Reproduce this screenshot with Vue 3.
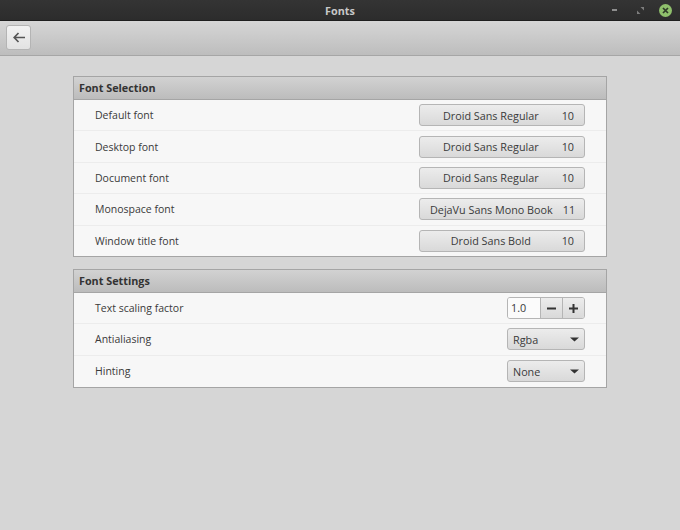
<template>
  <div class="window">
    <div class="titlebar">
      <span class="title">Fonts</span>
      <div class="wm-buttons">
        <span class="wm-min"></span>
        <svg class="wm-max" width="7" height="7" viewBox="0 0 7 7">
          <path d="M3.5 0H7V3.5ZM3.5 7H0V3.5Z" fill="#7d7d7d" />
        </svg>
        <span class="wm-close">
          <svg width="7" height="7" viewBox="0 0 7 7">
            <path d="M1 1L6 6M6 1L1 6" stroke="#2f3a28" stroke-width="1.7" />
          </svg>
        </span>
      </div>
    </div>

    <div class="toolbar">
      <button class="btn-back">
        <svg width="12" height="11" viewBox="0 0 12 11">
          <path d="M5.5 1L1.2 5.5L5.5 10M2 5.5H12" fill="none" stroke="#555" stroke-width="1.7" />
        </svg>
      </button>
    </div>

    <div class="content">
      <section class="panel">
        <h2 class="panel-header">Font Selection</h2>
        <div v-for="f in fuentes" :key="f.label" class="row">
          <span class="label">{{ f.label }}</span>
          <button class="btn btn-font">
            <span class="font-name">{{ f.font }}</span>
            <span class="font-size">{{ f.size }}</span>
          </button>
        </div>
      </section>

      <section class="panel">
        <h2 class="panel-header">Font Settings</h2>
        <div class="row">
          <span class="label">Text scaling factor</span>
          <div class="spin">
            <span class="spin-value">1.0</span>
            <button class="spin-btn">
              <svg width="9" height="9" viewBox="0 0 9 9"><path d="M0 4.5H9" stroke="#333" stroke-width="2" /></svg>
            </button>
            <button class="spin-btn">
              <svg width="9" height="9" viewBox="0 0 9 9"><path d="M0 4.5H9M4.5 0V9" stroke="#333" stroke-width="2" /></svg>
            </button>
          </div>
        </div>
        <div v-for="c in combos" :key="c.label" class="row">
          <span class="label">{{ c.label }}</span>
          <button class="btn btn-combo">
            <span>{{ c.value }}</span>
            <svg width="9" height="5" viewBox="0 0 9 5"><path d="M0 0.5H9L4.5 4.5Z" fill="#333" /></svg>
          </button>
        </div>
      </section>
    </div>
  </div>
</template>

<script setup>
const fuentes = [
  { label: 'Default font', font: 'Droid Sans Regular', size: 10 },
  { label: 'Desktop font', font: 'Droid Sans Regular', size: 10 },
  { label: 'Document font', font: 'Droid Sans Regular', size: 10 },
  { label: 'Monospace font', font: 'DejaVu Sans Mono Book', size: 11 },
  { label: 'Window title font', font: 'Droid Sans Bold', size: 10 }
]

const combos = [
  { label: 'Antialiasing', value: 'Rgba' },
  { label: 'Hinting', value: 'None' }
]
</script>

<style>
html, body { margin: 0; background: #d6d6d6; }
</style>

<style scoped>
.window {
  width: 680px;
  height: 530px;
  overflow: hidden;
  display: flex;
  flex-direction: column;
  font-family: "Open Sans", "Noto Sans", sans-serif;
  font-size: 10.8px;
  color: #3a3a3a;
  background: #d6d6d6;
}

.titlebar {
  height: 20px;
  flex: none;
  position: relative;
  display: flex;
  align-items: center;
  justify-content: center;
  background: linear-gradient(#343434, #2c2c2c);
  border-bottom: 1px solid #1f1f1f;
}
.title { color: #c8c8c8; font-weight: 700; font-size: 10.8px; }
.wm-buttons {
  position: absolute;
  right: 8px;
  top: 3px;
  display: flex;
  align-items: center;
  gap: 15px;
  height: 14px;
}
.wm-min { width: 5px; height: 2px; background: #8e8e8e; margin-right: 5px; }
.wm-max { display: block; }
.wm-close {
  width: 13px;
  height: 13px;
  border-radius: 50%;
  background: #8fc06c;
  display: flex;
  align-items: center;
  justify-content: center;
}

.toolbar {
  height: 30px;
  flex: none;
  padding: 4px 6px 0;
  background: linear-gradient(#d6d6d6, #bdbdbd);
  border-bottom: 1px solid #a6a6a6;
}
.btn-back {
  width: 25px;
  height: 25px;
  padding: 0;
  display: flex;
  align-items: center;
  justify-content: center;
  border: 1px solid #b4b4b4;
  border-radius: 3px;
  background: linear-gradient(#f2f2f2, #e2e2e2);
}

.content {
  padding: 20px 73px 0;
  display: flex;
  flex-direction: column;
  gap: 12px;
}

.panel {
  border: 1px solid #a5a5a5;
  background: #f7f7f7;
  width: 534px;
  box-sizing: border-box;
}
.panel-header {
  margin: 0;
  height: 22px;
  line-height: 22px;
  padding-left: 5px;
  font-size: 10.8px;
  font-weight: 700;
  color: #333;
  background: linear-gradient(#d2d2d2, #bcbcbc);
  border-bottom: 1px solid #a5a5a5;
}
.panel + .panel .panel-header { height: 22.4px; }

.row {
  height: 31.4px;
  box-sizing: border-box;
  padding: 0 21px;
  display: flex;
  align-items: center;
  justify-content: space-between;
  border-bottom: 1px solid #ececec;
}
.row:last-child { height: 30.4px; border-bottom: none; }
.panel + .panel .row { height: 31.1px; }
.label { font-size: 10.5px; }

.btn {
  height: 22px;
  box-sizing: border-box;
  padding: 0;
  border: 1px solid #b5b5b5;
  border-radius: 3px;
  background: linear-gradient(#ececec, #d9d9d9);
  font: inherit;
  color: #3a3a3a;
  display: flex;
  align-items: center;
}
.btn-font { width: 166px; padding: 0 10px; white-space: nowrap; }
.font-name { flex: 1; text-align: center; }
.font-size { margin-left: 10px; }
.btn-combo { width: 78px; padding: 0 5px 0 5px; justify-content: space-between; }

.spin {
  width: 78px;
  height: 22px;
  box-sizing: border-box;
  display: flex;
  border: 1px solid #b5b5b5;
  border-radius: 3px;
  overflow: hidden;
}
.spin-value {
  flex: 1;
  padding-left: 3px;
  line-height: 20px;
  background: #fbfbfb;
}
.spin-btn {
  width: 22px;
  padding: 0;
  border: none;
  border-left: 1px solid #b5b5b5;
  background: linear-gradient(#ececec, #d9d9d9);
  display: flex;
  align-items: center;
  justify-content: center;
}
</style>
